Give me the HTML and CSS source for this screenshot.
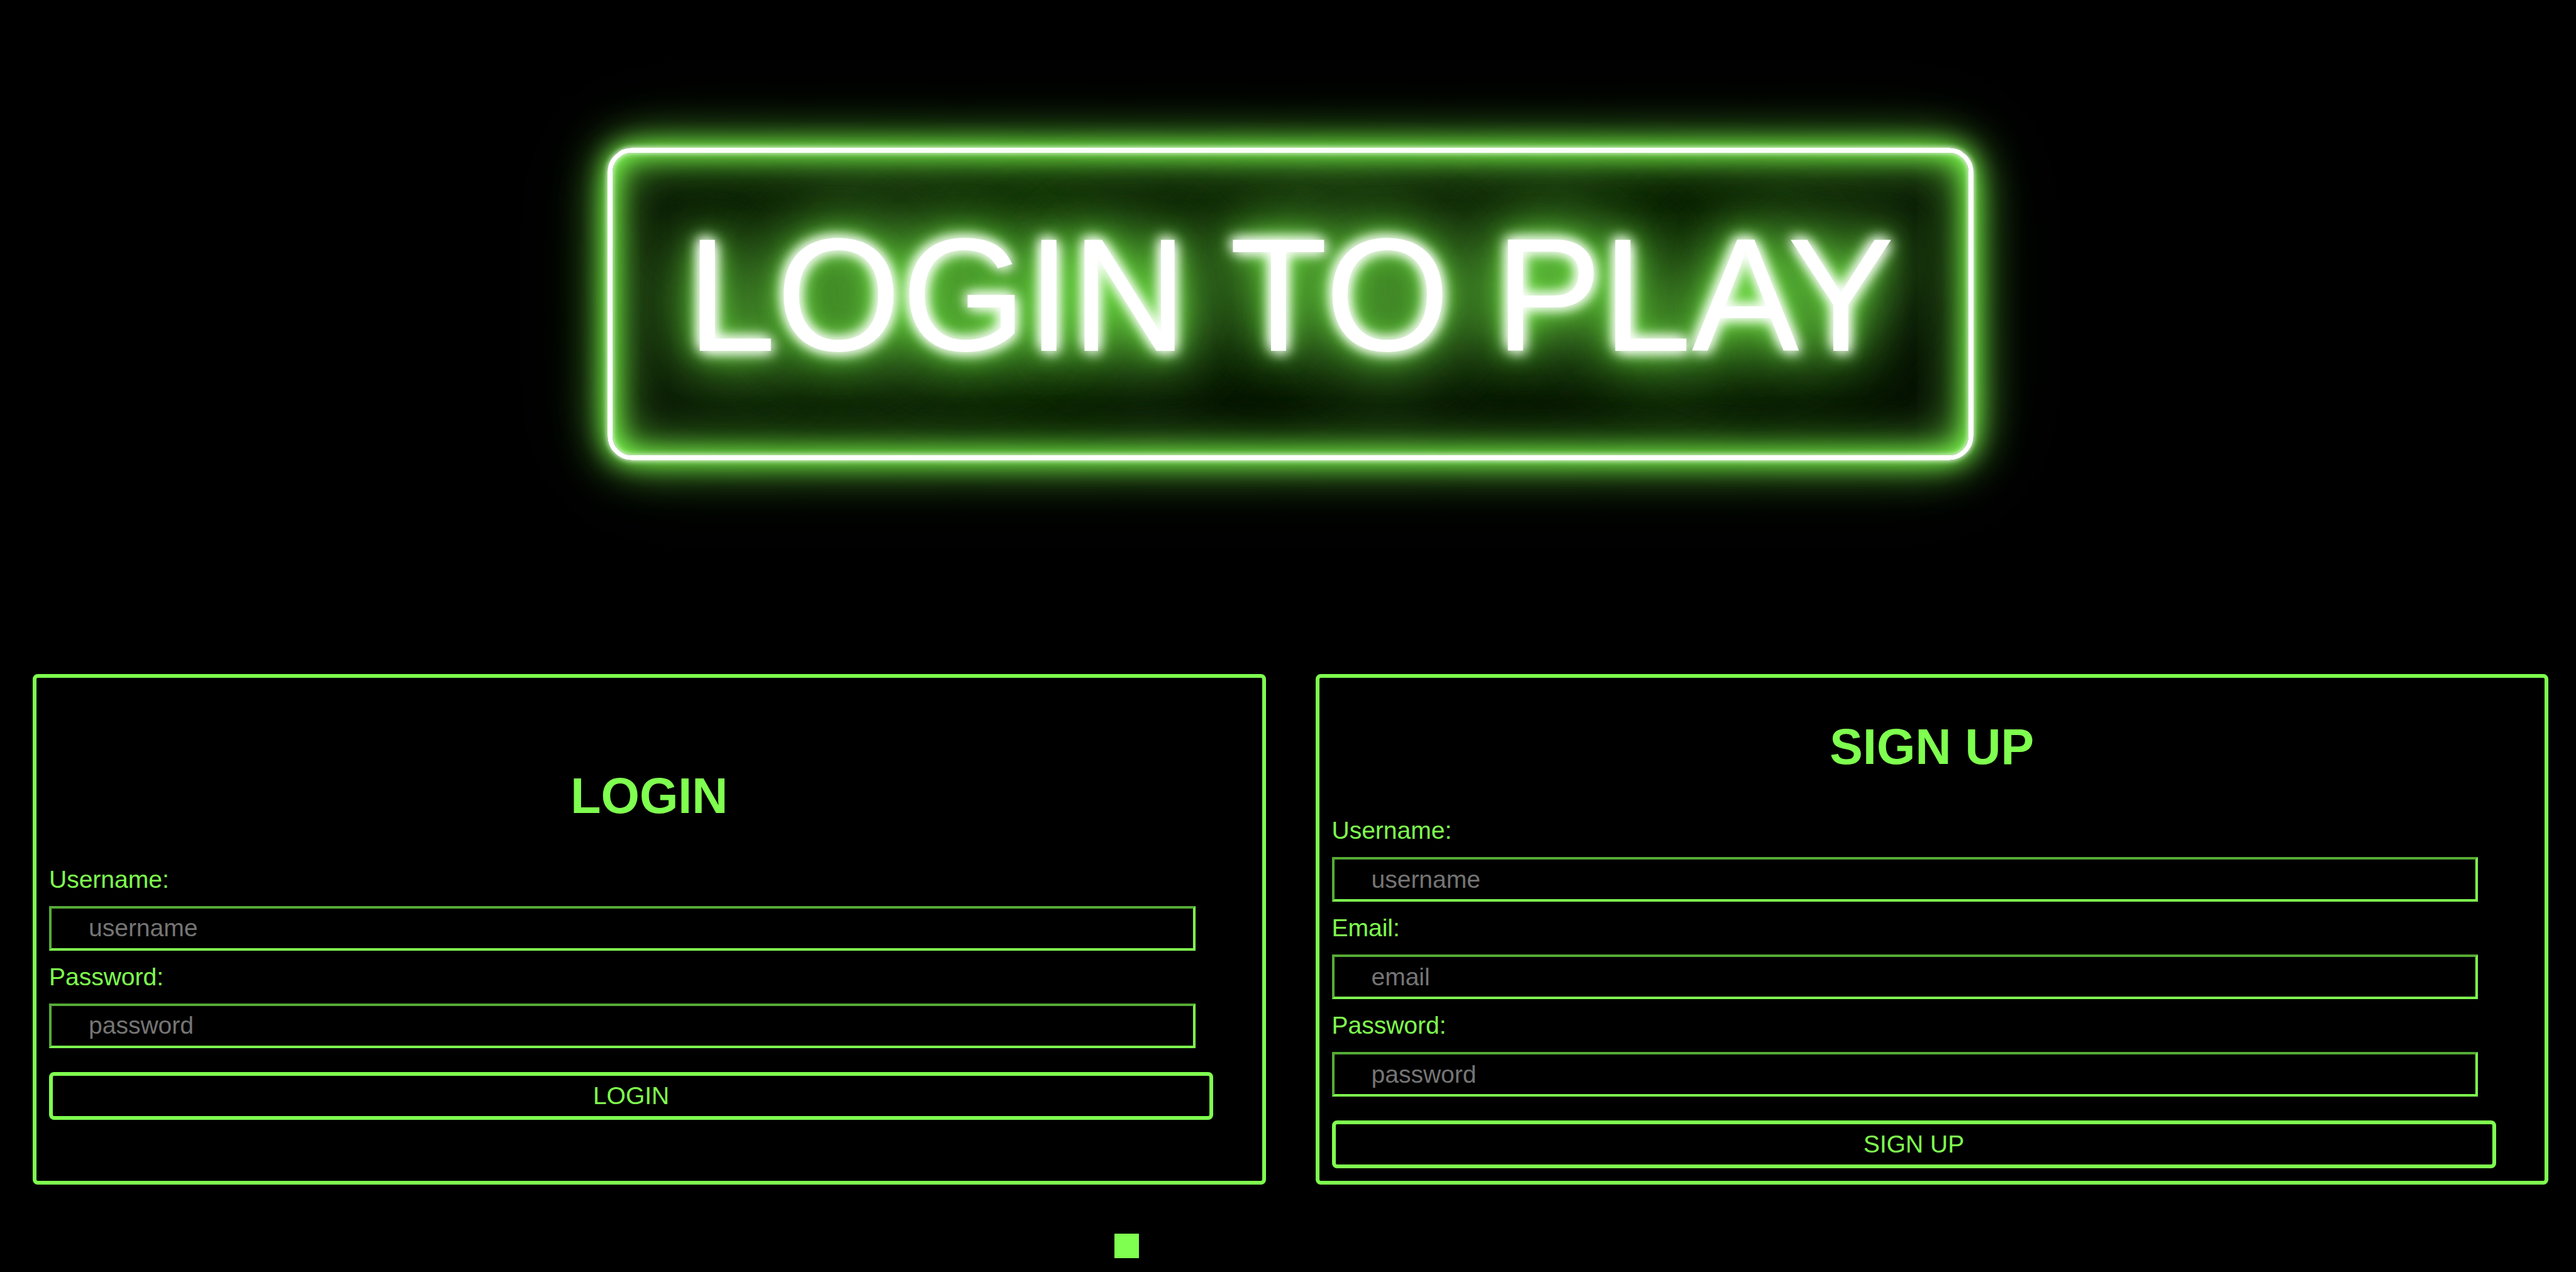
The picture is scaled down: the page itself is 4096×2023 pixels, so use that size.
FILE: index.html
```html
<!DOCTYPE html>
<html lang="en">
<head>
  <meta charset="utf-8">
  <title>Login to play</title>
  <link rel="stylesheet" href="styles.css">
</head>
<body>
  <header class="masthead">
    <h1 class="neon-sign">Login to play</h1>
  </header>
  <main class="panels">
    <form class="panel">
      <h2 class="panel-title">LOGIN</h2>
      <label class="label" for="login-username">Username:</label>
      <input class="field" id="login-username" type="text" placeholder="username">
      <label class="label" for="login-password">Password:</label>
      <input class="field" id="login-password" type="password" placeholder="password">
      <button class="submit" type="button">LOGIN</button>
    </form>
    <form class="panel">
      <h2 class="panel-title">SIGN UP</h2>
      <label class="label" for="signup-username">Username:</label>
      <input class="field" id="signup-username" type="text" placeholder="username">
      <label class="label" for="signup-email">Email:</label>
      <input class="field" id="signup-email" type="email" placeholder="email">
      <label class="label" for="signup-password">Password:</label>
      <input class="field" id="signup-password" type="password" placeholder="password">
      <button class="submit" type="button">SIGN UP</button>
    </form>
  </main>
  <div class="track"><div class="block"></div></div>
</body>
</html>
```
FILE: styles.css
```css
:root {
  --neon: #7fff4f;
}

* {
  box-sizing: border-box;
}

body {
  margin: 0;
  padding: 0 44px 0 52px;
  background: #000;
  color: var(--neon);
  font-family: Arial, "Liberation Sans", sans-serif;
  font-size: 39px;
}

.masthead {
  display: flex;
  justify-content: center;
  padding: 235px 0 340px;
}

.neon-sign {
  margin: 0;
  padding: 79px 118px 108px;
  border: 8px solid #fff;
  border-radius: 39px;
  color: #fff;
  font-size: 256px;
  font-weight: 200;
  line-height: 294px;
  text-transform: uppercase;
  white-space: nowrap;
  text-shadow:
    -4px -4px 20px #fff,
    4px 4px 20px #fff,
    0 0 39px var(--neon),
    0 0 79px var(--neon),
    0 0 118px var(--neon),
    0 0 157px var(--neon),
    0 0 197px var(--neon);
  box-shadow:
    0 0 10px #fff,
    inset 0 0 10px #fff,
    0 0 39px var(--neon),
    inset 0 0 39px var(--neon),
    0 0 79px var(--neon),
    inset 0 0 79px var(--neon),
    0 0 157px rgb(127 255 79 / 12%),
    inset 0 0 197px rgb(127 255 79 / 24%);
}

.panels {
  display: grid;
  grid-template-columns: 1fr 1fr;
  gap: 79px;
}

.panel {
  display: flex;
  flex-direction: column;
  align-items: flex-start;
  justify-content: center;
  padding: 20px;
  border: 6px solid var(--neon);
  border-radius: 8px;
}

.panel-title {
  align-self: stretch;
  margin: 45px 0 66px;
  font-size: 79px;
  line-height: 90px;
  text-align: center;
}

.label {
  margin-bottom: 20px;
  line-height: 44px;
}

.field {
  box-sizing: content-box;
  width: 92%;
  height: 63px;
  margin: 0 0 20px;
  padding: 0 0 0 59px;
  border: 4px inset var(--neon);
  background: #000;
  color: var(--neon);
  font: inherit;
}

.field::placeholder {
  color: #757575;
}

.submit {
  width: 97%;
  height: 76px;
  margin-top: 18px;
  padding: 0;
  border: 6px solid var(--neon);
  border-radius: 8px;
  background: #000;
  color: var(--neon);
  font: inherit;
}

.track {
  padding: 78px 0 20px;
}

.block {
  width: 39px;
  height: 39px;
  margin-left: 43%;
  background: var(--neon);
}
```
